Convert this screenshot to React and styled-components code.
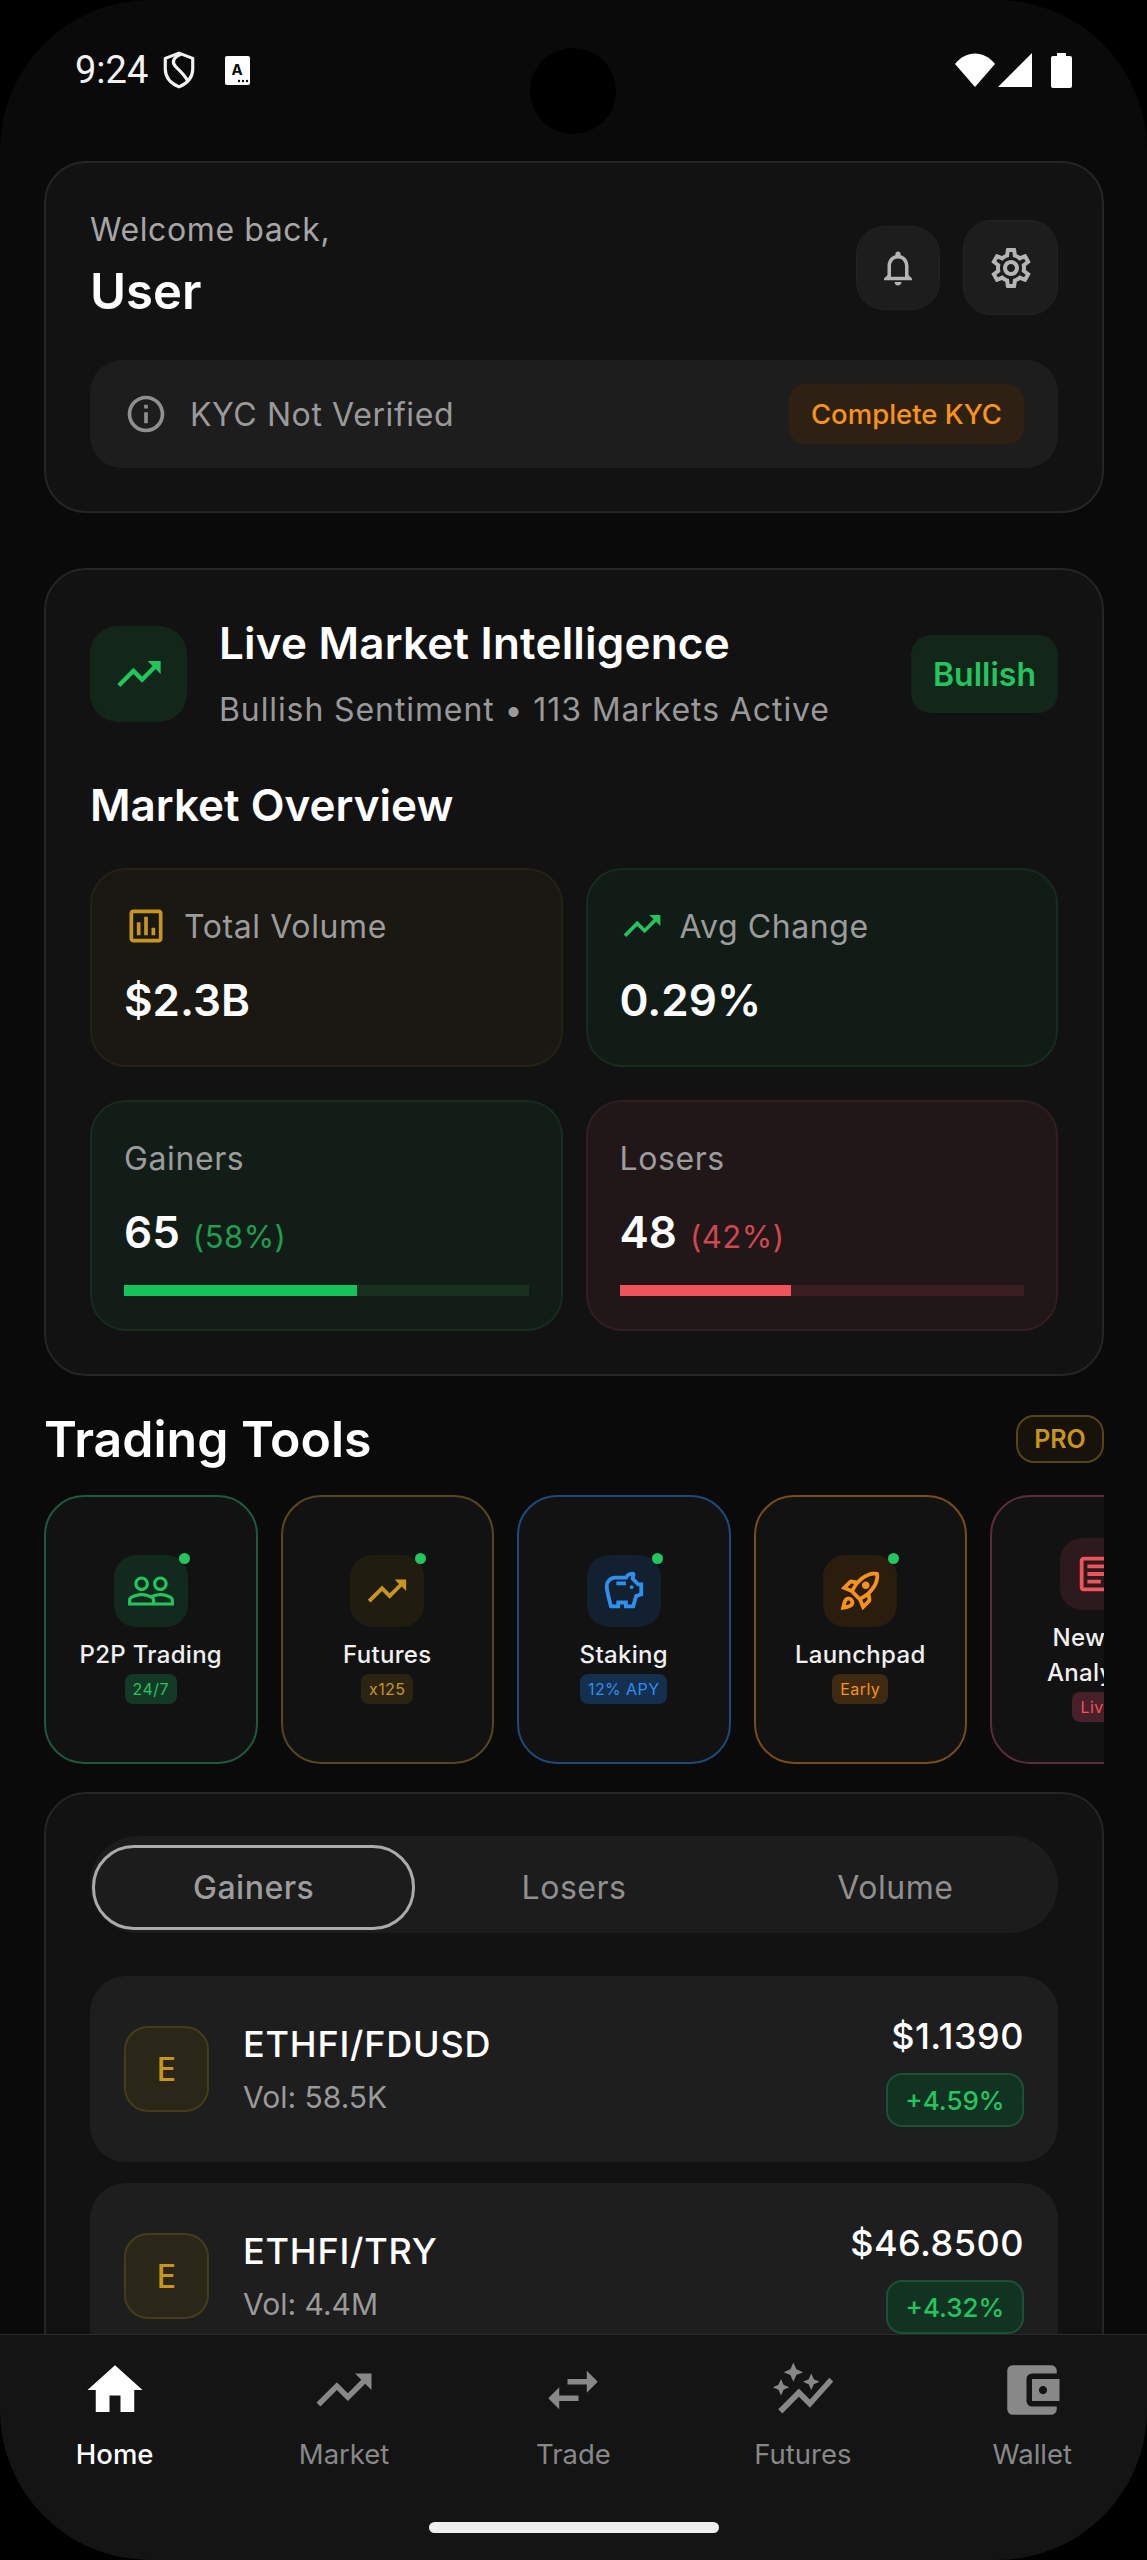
import React from "react";
import styled, { createGlobalStyle } from "styled-components";
import {
  MdOutlineNotifications,
  MdOutlineSettings,
  MdInfoOutline,
  MdTrendingUp,
  MdOutlineAssessment,
  MdPeopleOutline,
  MdOutlineSavings,
  MdOutlineRocketLaunch,
  MdOutlineArticle,
  MdHome,
  MdSwapHoriz,
  MdAutoGraph,
  MdAccountBalanceWallet,
} from "react-icons/md";

const GlobalStyle = createGlobalStyle`
  html, body {
    margin: 0;
    padding: 0;
    background: #000;
  }
  * {
    box-sizing: border-box;
  }
`;

const Frame = styled.div`
  position: relative;
  width: 1147px;
  height: 2560px;
  overflow: hidden;
  border-radius: 150px;
  background: #0a0a0a;
  color: #fff;
  font-family: Inter, "Liberation Sans", sans-serif;
`;

const StatusBar = styled.div`
  display: flex;
  align-items: center;
  justify-content: space-between;
  height: 140px;
  margin-bottom: 21px;
  padding: 0 75px;
`;

const StatusGroup = styled.div`
  display: flex;
  align-items: center;
  gap: ${(p) => p.$gap}px;
  margin-left: ${(p) => p.$offset || 0}px;
`;

const Clock = styled.span`
  font-family: Roboto, "Liberation Sans", sans-serif;
  font-size: 38px;
  color: #f2f2f2;
`;

const Camera = styled.div`
  position: absolute;
  top: 48px;
  left: 530px;
  width: 86px;
  height: 86px;
  border-radius: 50%;
  background: #000;
`;

const Page = styled.div`
  padding: 0 43px 0 44px;
`;

const Card = styled.section`
  background: #121212;
  border: 2px solid #252525;
  border-radius: 42px;
  padding: ${(p) => p.$padding};
  margin-bottom: ${(p) => p.$after || 0}px;
`;

const TopRow = styled.div`
  display: flex;
  align-items: center;
  justify-content: space-between;
  margin-bottom: 32px;
`;

const Welcome = styled.div`
  font-size: 32px;
  line-height: 46px;
  color: #a6a6a6;
  letter-spacing: 0.6px;
  margin-bottom: 3px;
`;

const UserName = styled.div`
  font-size: 49px;
  line-height: 72px;
  font-weight: 600;
`;

const Actions = styled.div`
  display: flex;
  align-items: center;
  gap: 23px;
`;

const IconButton = styled.div`
  display: flex;
  align-items: center;
  justify-content: center;
  width: ${(p) => p.$size}px;
  height: ${(p) => p.$size}px;
  border-radius: 28px;
  background: #1d1d1d;
  border: 1px solid #232323;
  color: #b5b5b5;
`;

const KycBar = styled.div`
  display: flex;
  align-items: center;
  height: 108px;
  padding: 0 34px;
  border-radius: 32px;
  background: #1d1d1d;
  color: #8f8f8f;
`;

const KycText = styled.span`
  flex: 1;
  margin-left: 22px;
  font-size: 32px;
  letter-spacing: 0.6px;
  color: #9a9a9a;
`;

const KycButton = styled.div`
  display: flex;
  align-items: center;
  height: 60px;
  padding: 0 22px;
  border-radius: 16px;
  background: #2e2113;
  color: #f7931a;
  font-size: 27.5px;
  font-weight: 500;
`;

const MarketHead = styled.div`
  display: flex;
  align-items: center;
`;

const TrendBox = styled.div`
  display: flex;
  align-items: center;
  justify-content: center;
  flex-shrink: 0;
  width: 97px;
  height: 96px;
  border-radius: 28px;
  background: #12261a;
  color: #22c55e;
`;

const MarketTitleBlock = styled.div`
  flex: 1;
  margin-left: 32px;
`;

const MarketTitle = styled.div`
  font-size: 44px;
  line-height: 56px;
  font-weight: 600;
  letter-spacing: 0.2px;
  margin-bottom: 16px;
`;

const MarketSub = styled.div`
  font-size: 32px;
  line-height: 46px;
  color: #999;
  letter-spacing: 0.9px;
`;

const BullishTag = styled.div`
  display: flex;
  align-items: center;
  height: 78px;
  padding: 0 22px;
  border-radius: 20px;
  background: #12261a;
  color: #22c55e;
  font-size: 32px;
  font-weight: 600;
`;

const SectionTitle = styled.div`
  font-size: 44px;
  line-height: 56px;
  font-weight: 600;
  margin: 44px 0 35px;
`;

const StatGrid = styled.div`
  display: grid;
  grid-template-columns: 1fr 1fr;
  gap: 33px 23px;
`;

const StatCard = styled.div`
  padding: 35px 32px ${(p) => p.$bottom}px;
  border-radius: 36px;
  background: ${(p) => p.$bg};
  border: 2px solid ${(p) => p.$line};
`;

const StatLabel = styled.div`
  display: flex;
  align-items: center;
  gap: 16px;
  height: 42px;
  font-size: 32px;
  letter-spacing: 0.6px;
  color: #9c9c9c;
  svg {
    color: ${(p) => p.$accent};
  }
`;

const StatValue = styled.div`
  display: flex;
  align-items: baseline;
  gap: 13px;
  margin-top: 23px;
  font-size: 44px;
  line-height: 60px;
  font-weight: 600;
`;

const StatShare = styled.span`
  font-size: 31px;
  line-height: 1;
  font-weight: 400;
  letter-spacing: 0.5px;
  color: ${(p) => p.$color};
`;

const BarTrack = styled.div`
  height: 11px;
  margin-top: 23px;
  background: ${(p) => p.$color};
`;

const BarFill = styled.div`
  height: 100%;
  background: ${(p) => p.$color};
`;

const ToolsHead = styled.div`
  display: flex;
  align-items: center;
  justify-content: space-between;
  height: 68px;
  margin: 29px 0 22px;
`;

const ToolsTitle = styled.div`
  font-size: 50px;
  font-weight: 600;
`;

const ProTag = styled.div`
  display: flex;
  align-items: center;
  justify-content: center;
  width: 88px;
  height: 48px;
  border-radius: 18px;
  background: #17130a;
  border: 2px solid #574416;
  color: #c8961e;
  font-size: 25px;
  font-weight: 600;
`;

const ToolRow = styled.div`
  display: flex;
  gap: 23px;
  overflow: hidden;
  margin-bottom: 28px;
`;

const ToolCard = styled.div`
  display: flex;
  flex-direction: column;
  align-items: center;
  justify-content: center;
  flex-shrink: 0;
  width: 213.5px;
  height: 269px;
  padding: 0 20px;
  border-radius: 40px;
  background: #121212;
  border: 2px solid ${(p) => p.$line};
  text-align: center;
`;

const ToolIcon = styled.div`
  position: relative;
  display: flex;
  align-items: center;
  justify-content: center;
  width: 74px;
  height: 72px;
  border-radius: 22px;
  background: ${(p) => p.$bg};
  color: ${(p) => p.$accent};
`;

const LiveDot = styled.span`
  position: absolute;
  top: -2px;
  right: -2px;
  width: 11px;
  height: 11px;
  border-radius: 50%;
  background: #22c55e;
`;

const ToolName = styled.div`
  margin-top: 10px;
  font-size: 24px;
  line-height: 35px;
  font-weight: 500;
  letter-spacing: 0.3px;
  color: #f0f0f0;
`;

const ToolChip = styled.div`
  display: flex;
  align-items: center;
  height: 30px;
  margin-top: 2px;
  padding: 0 8px;
  border-radius: 8px;
  background: ${(p) => p.$bg};
  color: ${(p) => p.$accent};
  font-size: 16px;
  letter-spacing: 0.4px;
  white-space: nowrap;
`;

const TabBar = styled.div`
  display: grid;
  grid-template-columns: repeat(3, 1fr);
  height: 97px;
  padding: 9px 2px 3px;
  border-radius: 48px;
  background: #1c1c1c;
  margin-bottom: 43px;
`;

const Tab = styled.div`
  display: flex;
  align-items: center;
  justify-content: center;
  margin-right: ${(p) => (p.$active ? -2 : 0)}px;
  border-radius: 42px;
  border: 3px solid ${(p) => (p.$active ? "#ababab" : "transparent")};
  color: ${(p) => (p.$active ? "#9c9c9c" : "#8f8f8f")};
  font-size: 32px;
  font-weight: ${(p) => (p.$active ? 500 : 400)};
  letter-spacing: 0.5px;
`;

const PairList = styled.div`
  display: flex;
  flex-direction: column;
  gap: 21px;
`;

const PairRow = styled.div`
  display: flex;
  align-items: center;
  height: 186px;
  padding: 0 34px;
  border-radius: 36px;
  background: #1e1e1e;
`;

const TokenBadge = styled.div`
  display: flex;
  align-items: center;
  justify-content: center;
  flex-shrink: 0;
  width: 85px;
  height: 86px;
  border-radius: 24px;
  background: #2a2618;
  border: 2px solid #463c1c;
  color: #c8961e;
  font-size: 32px;
  font-weight: 500;
`;

const PairInfo = styled.div`
  flex: 1;
  margin-left: 34px;
`;

const PairName = styled.div`
  font-size: 36px;
  line-height: 50px;
  font-weight: 500;
  letter-spacing: 0.8px;
  margin-bottom: 6px;
`;

const PairVolume = styled.div`
  font-size: 30px;
  line-height: 44px;
  color: #9a9a9a;
`;

const PriceBlock = styled.div`
  display: flex;
  flex-direction: column;
  align-items: flex-end;
  gap: 12px;
`;

const Price = styled.div`
  font-size: 36px;
  line-height: 50px;
  font-weight: 500;
  letter-spacing: 0.5px;
`;

const ChangeChip = styled.div`
  display: flex;
  align-items: center;
  justify-content: center;
  width: 138px;
  height: 54px;
  border-radius: 16px;
  background: #123322;
  border: 2px solid #1b5237;
  color: #22c55e;
  font-size: 26px;
  font-weight: 500;
`;

const BottomNav = styled.nav`
  position: absolute;
  left: 0;
  right: 0;
  bottom: 0;
  display: flex;
  flex-direction: column;
  align-items: center;
  height: 226px;
  padding-top: 22px;
  background: #141414;
  border-top: 1px solid #2a2a2a;
`;

const NavItems = styled.div`
  display: grid;
  grid-template-columns: repeat(5, 1fr);
  width: 100%;
`;

const NavItem = styled.div`
  display: flex;
  flex-direction: column;
  align-items: center;
  gap: 13px;
  color: ${(p) => (p.$active ? "#fff" : "#888")};
  font-size: 27.5px;
  line-height: 36px;
  font-weight: ${(p) => (p.$active ? 500 : 400)};
`;

const HomeIndicator = styled.div`
  width: 290px;
  height: 11px;
  margin-top: 50px;
  border-radius: 6px;
  background: #eee;
`;

const tools = [
  { name: "P2P Trading", chip: "24/7", Icon: MdPeopleOutline, iconSize: 50, accent: "#22c55e", line: "#1c5a3c", bg: "#12291d", chipBg: "#143a27", live: true },
  { name: "Futures", chip: "x125", Icon: MdTrendingUp, iconSize: 46, accent: "#c8961e", line: "#5a4520", bg: "#211c10", chipBg: "#2b2412", live: true },
  { name: "Staking", chip: "12% APY", Icon: MdOutlineSavings, iconSize: 46, accent: "#2f8ff0", line: "#1d4a78", bg: "#12202f", chipBg: "#14304e", live: true },
  { name: "Launchpad", chip: "Early", Icon: MdOutlineRocketLaunch, iconSize: 46, accent: "#f7931a", line: "#7a4c18", bg: "#2a1d0e", chipBg: "#3e2a11", live: true },
  { name: "News & Analysis", chip: "Live", Icon: MdOutlineArticle, iconSize: 46, accent: "#f0535b", line: "#5c2b3c", bg: "#2c1a1d", chipBg: "#47202a", live: false },
];

const pairs = [
  { name: "ETHFI/FDUSD", vol: "Vol: 58.5K", price: "$1.1390", change: "+4.59%" },
  { name: "ETHFI/TRY", vol: "Vol: 4.4M", price: "$46.8500", change: "+4.32%" },
];

const navItems = [
  { label: "Home", Icon: MdHome, active: true },
  { label: "Market", Icon: MdTrendingUp },
  { label: "Trade", Icon: MdSwapHoriz },
  { label: "Futures", Icon: MdAutoGraph },
  { label: "Wallet", Icon: MdAccountBalanceWallet },
];

const ShieldIcon = () => (
  <svg width="32" height="38" viewBox="0 0 30 36" fill="none" stroke="#f2f2f2" strokeWidth="3" strokeLinejoin="round">
    <path d="M15 2 L28 7 V17 C28 26 22 31 15 34 C8 31 2 26 2 17 V7 Z" />
    <path d="M17 3 C9 6 8 11 12 15 C16 19 20 22 23 28" />
  </svg>
);

const KeyboardIcon = () => (
  <svg width="25" height="29" viewBox="0 0 25 29">
    <rect width="25" height="29" rx="2" fill="#fff" />
    <text x="12" y="19" textAnchor="middle" fontFamily="Inter, sans-serif" fontSize="15" fontWeight="700" fill="#0a0a0a">A</text>
    <circle cx="14" cy="25" r="1.2" fill="#0a0a0a" />
    <circle cx="18" cy="25" r="1.2" fill="#0a0a0a" />
    <circle cx="22" cy="25" r="1.2" fill="#0a0a0a" />
  </svg>
);

const WifiIcon = () => (
  <svg width="40" height="34" viewBox="0 0 40 34" fill="#fff">
    <path d="M0 11 C11 -3 29 -3 40 11 L20 34 Z" />
  </svg>
);

const SignalIcon = () => (
  <svg width="34" height="34" viewBox="0 0 34 34" fill="#fff">
    <path d="M34 0 V34 H0 Z" />
  </svg>
);

const BatteryIcon = () => (
  <svg width="21" height="35" viewBox="0 0 21 35" fill="#fff">
    <path d="M6 0 H15 V3 H19 A2 2 0 0 1 21 5 V33 A2 2 0 0 1 19 35 H2 A2 2 0 0 1 0 33 V5 A2 2 0 0 1 2 3 H6 Z" />
  </svg>
);

export default function App() {
  return (
    <Frame>
      <GlobalStyle />
      <StatusBar>
        <StatusGroup $gap={15}>
          <Clock>9:24</Clock>
          <ShieldIcon />
          <StatusGroup $gap={0} $offset={15}>
            <KeyboardIcon />
          </StatusGroup>
        </StatusGroup>
        <StatusGroup $gap={3}>
          <WifiIcon />
          <SignalIcon />
          <StatusGroup $gap={0} $offset={16}>
            <BatteryIcon />
          </StatusGroup>
        </StatusGroup>
      </StatusBar>
      <Camera />

      <Page>
        <Card $padding="44px 44px 43px" $after={55}>
          <TopRow>
            <div>
              <Welcome>Welcome back,</Welcome>
              <UserName>User</UserName>
            </div>
            <Actions>
              <IconButton $size={84}>
                <MdOutlineNotifications size={42} />
              </IconButton>
              <IconButton $size={95}>
                <MdOutlineSettings size={48} />
              </IconButton>
            </Actions>
          </TopRow>
          <KycBar>
            <MdInfoOutline size={44} />
            <KycText>KYC Not Verified</KycText>
            <KycButton>Complete KYC</KycButton>
          </KycBar>
        </Card>

        <Card $padding="45px 44px 43px">
          <MarketHead>
            <TrendBox>
              <MdTrendingUp size={52} />
            </TrendBox>
            <MarketTitleBlock>
              <MarketTitle>Live Market Intelligence</MarketTitle>
              <MarketSub>Bullish Sentiment • 113 Markets Active</MarketSub>
            </MarketTitleBlock>
            <BullishTag>Bullish</BullishTag>
          </MarketHead>
          <SectionTitle>Market Overview</SectionTitle>
          <StatGrid>
            <StatCard $bottom={35} $bg="#1a1812" $line="#262115">
              <StatLabel $accent="#c8961e">
                <MdOutlineAssessment size={44} />
                Total Volume
              </StatLabel>
              <StatValue>$2.3B</StatValue>
            </StatCard>
            <StatCard $bottom={35} $bg="#121c17" $line="#172b1e">
              <StatLabel $accent="#22c55e">
                <MdTrendingUp size={44} />
                Avg Change
              </StatLabel>
              <StatValue>0.29%</StatValue>
            </StatCard>
            <StatCard $bottom={33} $bg="#131d18" $line="#172b1e">
              <StatLabel>Gainers</StatLabel>
              <StatValue>
                65 <StatShare $color="#1f9e50">(58%)</StatShare>
              </StatValue>
              <BarTrack $color="#19301f">
                <BarFill $color="#12c45a" style={{ width: "57.5%" }} />
              </BarTrack>
            </StatCard>
            <StatCard $bottom={33} $bg="#211719" $line="#321e21">
              <StatLabel>Losers</StatLabel>
              <StatValue>
                48 <StatShare $color="#d0474f">(42%)</StatShare>
              </StatValue>
              <BarTrack $color="#3a1e22">
                <BarFill $color="#f0535b" style={{ width: "42.5%" }} />
              </BarTrack>
            </StatCard>
          </StatGrid>
        </Card>

        <ToolsHead>
          <ToolsTitle>Trading Tools</ToolsTitle>
          <ProTag>PRO</ProTag>
        </ToolsHead>
        <ToolRow>
          {tools.map((tool) => (
            <ToolCard key={tool.name} $line={tool.line}>
              <ToolIcon $bg={tool.bg} $accent={tool.accent}>
                <tool.Icon size={tool.iconSize} />
                {tool.live && <LiveDot />}
              </ToolIcon>
              <ToolName>{tool.name}</ToolName>
              <ToolChip $bg={tool.chipBg} $accent={tool.accent}>{tool.chip}</ToolChip>
            </ToolCard>
          ))}
        </ToolRow>

        <Card $padding="42px 44px">
          <TabBar>
            <Tab $active>Gainers</Tab>
            <Tab>Losers</Tab>
            <Tab>Volume</Tab>
          </TabBar>
          <PairList>
            {pairs.map((pair) => (
              <PairRow key={pair.name}>
                <TokenBadge>E</TokenBadge>
                <PairInfo>
                  <PairName>{pair.name}</PairName>
                  <PairVolume>{pair.vol}</PairVolume>
                </PairInfo>
                <PriceBlock>
                  <Price>{pair.price}</Price>
                  <ChangeChip>{pair.change}</ChangeChip>
                </PriceBlock>
              </PairRow>
            ))}
          </PairList>
        </Card>
      </Page>

      <BottomNav>
        <NavItems>
          {navItems.map((item) => (
            <NavItem key={item.label} $active={item.active}>
              <item.Icon size={66} />
              {item.label}
            </NavItem>
          ))}
        </NavItems>
        <HomeIndicator />
      </BottomNav>
    </Frame>
  );
}
